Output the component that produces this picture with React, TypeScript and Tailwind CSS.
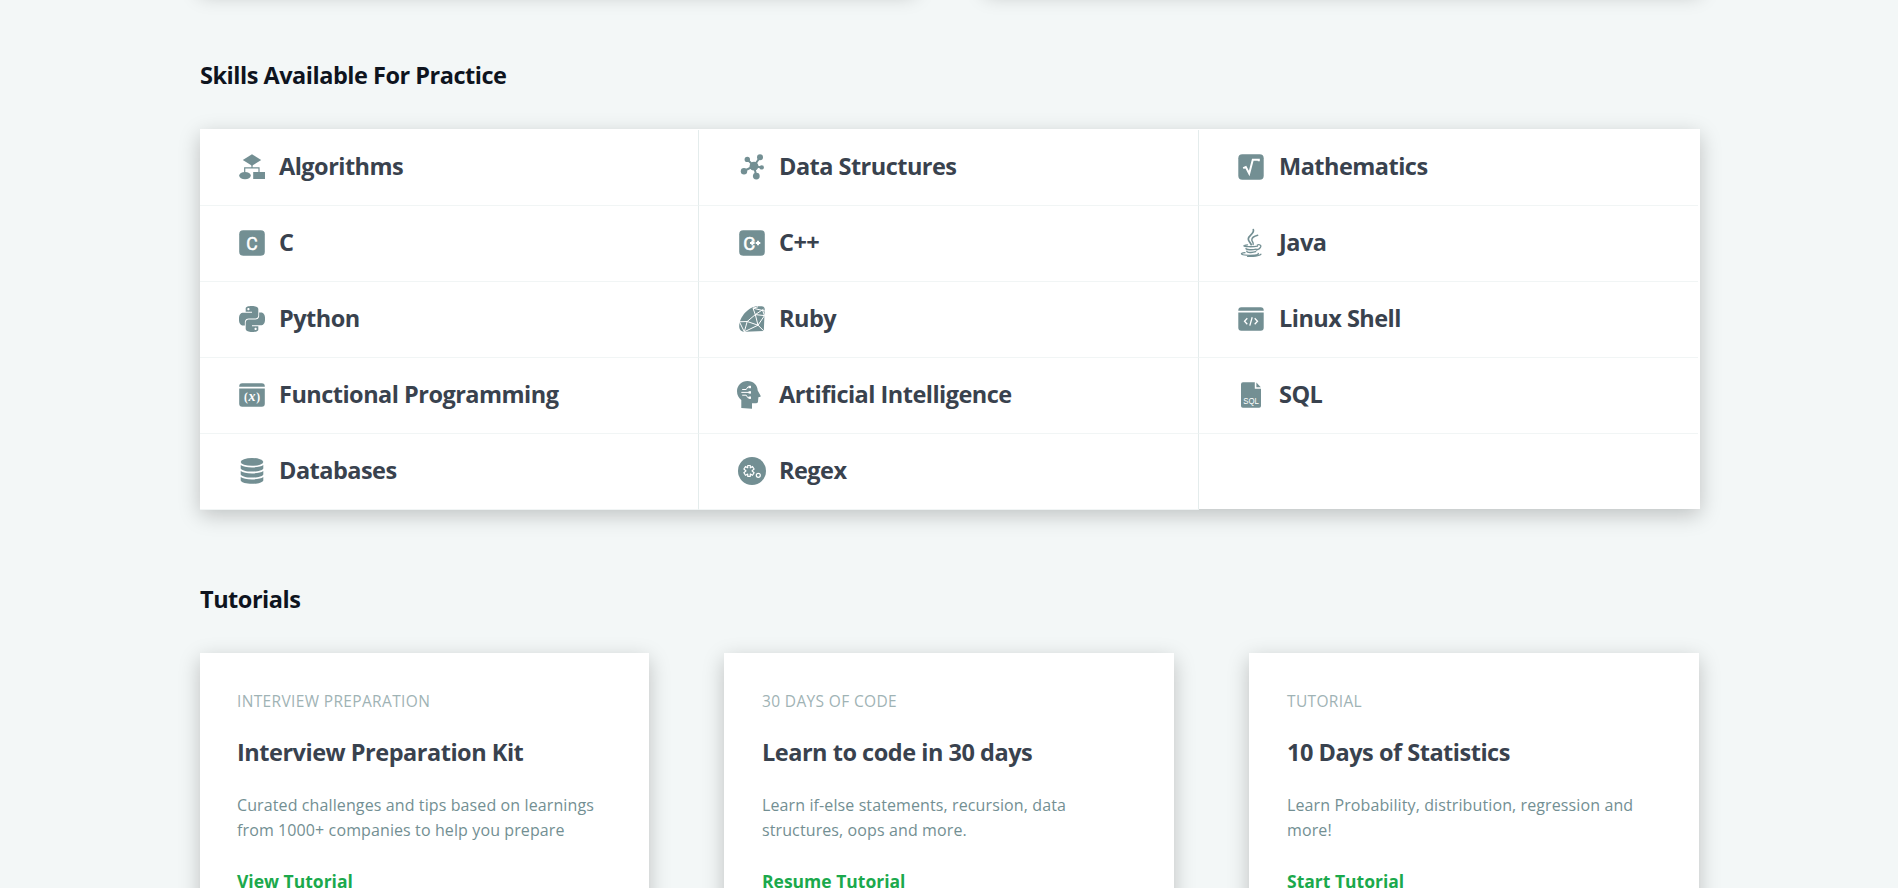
import type { ComponentType, ReactNode } from "react";
import { SiPython } from "react-icons/si";

function Icon({ children }: { children: ReactNode }) {
  return (
    <svg viewBox="0 0 28 28" className="h-7 w-7 overflow-visible" fill="currentColor">
      {children}
    </svg>
  );
}

const AlgorithmsIcon = () => (
  <Icon>
    <path d="M14 1.200 23.200 7 14 12.800 4.800 7Z" />
    <path d="M14 12v2.800M6.700 19.500V14.800H21V19.500" fill="none" stroke="currentColor" strokeWidth="1.200" />
    <ellipse cx="7" cy="22.600" rx="5.800" ry="3.700" />
    <rect x="15.200" y="19" width="11.800" height="7" />
  </Icon>
);

const DataStructuresIcon = () => (
  <Icon>
    <path d="M9.300 6.500 16 13 22 4.300M16 13l7.500 1.400M6 18l10-5 2.300 10" fill="none" stroke="currentColor" strokeWidth="2" />
    <circle cx="16" cy="13.200" r="4.400" />
    <circle cx="9.300" cy="6.400" r="2.700" />
    <circle cx="22" cy="4.200" r="3" />
    <circle cx="23.700" cy="14.400" r="2.200" />
    <circle cx="6" cy="18.200" r="3.200" />
    <circle cx="18.300" cy="23.100" r="3.400" />
  </Icon>
);

const MathematicsIcon = () => (
  <Icon>
    <rect x="0.300" y="1.200" width="25.400" height="25.600" rx="4" />
    <path d="M5.200 15.200 7.800 14l3.400 6.500 3.600-13.700h6v1.400" fill="none" stroke="#fff" strokeWidth="2" />
  </Icon>
);

const CIcon = () => (
  <Icon>
    <rect x="1.200" y="1.200" width="25.600" height="25.600" rx="4" />
    <text x="8.200" y="20.500" fontSize="18.500" fontFamily="Roboto, sans-serif" fill="#fff" stroke="#fff" strokeWidth="0.500" textLength="11.400" lengthAdjust="spacingAndGlyphs">C</text>
  </Icon>
);

const CppIcon = () => (
  <Icon>
    <rect x="1.200" y="1.200" width="25.600" height="25.600" rx="4" />
    <text x="5.200" y="20.500" fontSize="18.500" fontFamily="Roboto, sans-serif" fill="#fff" stroke="#fff" strokeWidth="0.500" textLength="12" lengthAdjust="spacingAndGlyphs">C</text>
    <path d="M14.300 11.700v4.600M12 14h4.600M20 11.700v4.600M17.700 14h4.600" stroke="#fff" strokeWidth="1.900" />
  </Icon>
);

const JavaIcon = () => (
  <Icon>
    <g fill="none" stroke="currentColor" strokeLinecap="round">
      <path d="M15.300.600c1.500 4.400-5 5.600-5 9.400 0 2.200 2 3.400 2.900 5.600" strokeWidth="1.700" />
      <path d="M19.700 6.300c-3.300.8-5.900 2.300-5.900 4.600 0 1.700 2 2.300 1.300 4.600" strokeWidth="1.400" />
      <path d="M9.500 15.800c-2 .2-3.700.7-3.500 1.200.4.900 9 1 13.500.1M19.300 16c2.300-.8 4 .2 3.500 1.700-.4 1.500-2.400 2.900-4.600 3.300" strokeWidth="1.300" />
      <path d="M8 19.400c-.4 1.500 6.500 1.700 10.200.7M8.800 22.200c-.2 1.500 5.700 1.700 8.900.5" strokeWidth="1.400" />
      <path d="M7 23.600c-3 .2-4.400 1-3.200 1.700 2.200 1.300 12.800 1.400 16 .2.800-.3.900-.8.200-1.200M23 25.200c-1.300 2-8.700 2.500-13.500 2.100" strokeWidth="1.200" />
    </g>
  </Icon>
);

const PythonIcon = () => <SiPython className="m-px h-[26px] w-[26px]" />;

const RubyIcon = () => (
  <Icon>
    <path d="M20 1.200h3.600c2 0 3.300 1.300 3.100 3.400L25.800 26 7 26.800c-3.600 0-5.700-2-5.800-5.400C1.200 12 10.500 1.200 20 1.200Z" />
    <path
      d="M1 16.800 9.200 16.500 17.300 9.600 15 3.200 26.800 6M17.300 9.600 26.500 10.600 20 20.200 9.200 16.500 6.300 26.800M17.300 9.600 20 20.200 25.900 26M17.300 9.600 25.500 4.200M20 20.200 6.300 26.800 1.600 17.200M26.500 10.600 24.500 5.200M15 3.200 20 1.800"
      fill="none"
      stroke="#fff"
      strokeWidth="1"
    />
  </Icon>
);

const ShellIcon = () => (
  <Icon>
    <path d="M.3 5.700V5.300a3 3 0 0 1 3-3h19.400a3 3 0 0 1 3 3v.4ZM.3 7.500h25.400v15.200a3 3 0 0 1-3 3H3.300a3 3 0 0 1-3-3Z" />
    <path d="M9.300 13.300 6.500 16.300l2.800 3M16.700 13.300l2.800 3-2.800 3M14.200 12.200 11.800 20.600" fill="none" stroke="#fff" strokeWidth="1.300" />
  </Icon>
);

const FunctionalIcon = () => (
  <Icon>
    <path d="M1.200 5.700V5.300a3 3 0 0 1 3-3h19.600a3 3 0 0 1 3 3v.4ZM1.200 7.500h25.600v15.200a3 3 0 0 1-3 3H4.200a3 3 0 0 1-3-3Z" />
    <text x="14" y="19.500" fontSize="11.500" fontWeight="700" fontFamily="'Liberation Serif', serif" fill="#fff" textAnchor="middle" textLength="16" lengthAdjust="spacing">
      (<tspan fontStyle="italic" fontSize="14">x</tspan>)
    </text>
  </Icon>
);

const DatabasesIcon = () => (
  <Icon>
    <ellipse cx="14" cy="4.900" rx="11.300" ry="3.900" />
    <path d="M2.700 8.100c2 1.500 6 2.300 11.300 2.300s9.300-.8 11.300-2.300v3.300c-1 2-5.500 3.100-11.300 3.100S3.700 13.400 2.700 11.400Z" />
    <path d="M2.700 14.100c2 1.500 6 2.300 11.300 2.300s9.300-.8 11.300-2.300v3.300c-1 2-5.500 3.100-11.300 3.100S3.700 19.400 2.700 17.400Z" />
    <path d="M2.700 20.100c2 1.500 6 2.300 11.300 2.300s9.300-.8 11.300-2.300v3.300c-1 2.200-5.500 3.300-11.300 3.300S3.700 25.600 2.700 23.400Z" />
  </Icon>
);

const IntelligenceIcon = () => (
  <Icon>
    <path d="M9.500 0C3.400 0-1 4.400-1 10.200c0 3.800 1.700 6.600 4.300 8.800v8l10.700.7v-5.400h4.200c1.200 0 1.700-.6 1.800-1.700l.4-4.300 2-.6c.4-.2.4-.5.200-.9L19.700 9.500C19.500 4 15.300 0 9.500 0Z" />
    <path d="M4.200 8.500h4l1.600-2.500h2M3.300 11.400h8M4.200 14.200h4l1.600 2.500h2" fill="none" stroke="#fff" strokeWidth="1" />
    <rect x="10.600" y="4.800" width="2.400" height="2.400" fill="#fff" />
    <rect x="10.600" y="10.200" width="2.400" height="2.400" fill="#fff" />
    <rect x="10.600" y="15.500" width="2.400" height="2.400" fill="#fff" />
  </Icon>
);

const RegexIcon = () => (
  <Icon>
    <circle cx="14" cy="14" r="14" />
    <path
      d="M9.700 8.500h2.600v2.300l2.200-1.300 1.600 2.500-2.100 1.900 2.100 1.900-1.600 2.500-2.200-1.300v2.300H9.700v-2.300l-2.200 1.300-1.600-2.500L8 13.900l-2.100-1.900 1.600-2.500 2.200 1.300Z"
      fill="none"
      stroke="#fff"
      strokeWidth="1.200"
      strokeLinejoin="round"
    />
    <circle cx="20.300" cy="18.300" r="2" fill="none" stroke="#fff" strokeWidth="1.200" />
  </Icon>
);

const SqlIcon = () => (
  <Icon>
    <path d="M5 1.200h11.800v6.600H23v17.200a1.800 1.800 0 0 1-1.800 1.800H4.800A1.800 1.800 0 0 1 3 25V3.200a2 2 0 0 1 2-2Z" />
    <path d="M18.400 1.600 22.800 6.200H18.400Z" />
    <text x="5.200" y="23" fontSize="8.500" fontFamily="'Liberation Sans', sans-serif" fill="#fff" textLength="15.600" lengthAdjust="spacingAndGlyphs">SQL</text>
  </Icon>
);

const skills: { name: string; icon: ComponentType }[] = [
  { name: "Algorithms", icon: AlgorithmsIcon },
  { name: "Data Structures", icon: DataStructuresIcon },
  { name: "Mathematics", icon: MathematicsIcon },
  { name: "C", icon: CIcon },
  { name: "C++", icon: CppIcon },
  { name: "Java", icon: JavaIcon },
  { name: "Python", icon: PythonIcon },
  { name: "Ruby", icon: RubyIcon },
  { name: "Linux Shell", icon: ShellIcon },
  { name: "Functional Programming", icon: FunctionalIcon },
  { name: "Artificial Intelligence", icon: IntelligenceIcon },
  { name: "SQL", icon: SqlIcon },
  { name: "Databases", icon: DatabasesIcon },
  { name: "Regex", icon: RegexIcon },
];

const tutorials = [
  {
    label: "INTERVIEW PREPARATION",
    title: "Interview Preparation Kit",
    text: "Curated challenges and tips based on learnings from 1000+ companies to help you prepare",
    action: "View Tutorial",
  },
  {
    label: "30 DAYS OF CODE",
    title: "Learn to code in 30 days",
    text: "Learn if-else statements, recursion, data structures, oops and more.",
    action: "Resume Tutorial",
  },
  {
    label: "TUTORIAL",
    title: "10 Days of Statistics",
    text: "Learn Probability, distribution, regression and more!",
    action: "Start Tutorial",
  },
];

const cellEdges = ["border-r pl-[38px]", "border-r pl-[39px]", "pl-[39px]"];
const cardPadding = ["pl-[37px]", "pl-[38px]", "pl-[38px]"];

function SkillCell({ name, icon: Glyph, column }: { name: string; icon: ComponentType; column: number }) {
  return (
    <a className={`flex h-[76px] items-start border-b border-r-[#e4ecec] border-b-[#f1f5f5] bg-white pt-[23px] ${cellEdges[column]}`}>
      <span className="flex h-7 w-[41px] shrink-0 text-[#738f93]">
        <Glyph />
      </span>
      <span className="-mt-[3px] text-[23.5px] leading-8 font-bold tracking-[-0.52px] text-[#39424e]">{name}</span>
    </a>
  );
}

export default function App() {
  return (
    <main className="h-[888px] overflow-hidden bg-[#f3f7f7] pl-[200px] font-['Open_Sans','Noto_Sans',sans-serif]">
      <div className="-mt-10 grid h-[29px] w-[1500px] grid-cols-2 gap-[70px]">
        <div className="bg-white shadow-[0_6px_20px_rgba(0,0,0,0.22)]" />
        <div className="bg-white shadow-[0_6px_20px_rgba(0,0,0,0.22)]" />
      </div>

      <h2 className="mt-[70px] text-[23.5px] leading-8 font-bold tracking-[-0.48px] text-[#0e141e]">Skills Available For Practice</h2>
      <section className="mt-[38px] h-[380px] w-[1500px] bg-white pt-px shadow-[0_6px_20px_rgba(0,0,0,0.22)]">
        <div className="grid grid-cols-[499px_500px_499px]">
          {skills.map((skill, i) => (
            <SkillCell key={skill.name} name={skill.name} icon={skill.icon} column={i % 3} />
          ))}
        </div>
      </section>

      <h2 className="mt-[74px] text-[23.5px] leading-8 font-bold tracking-[-0.48px] text-[#0e141e]">Tutorials</h2>
      <section className="mt-[38px] grid grid-cols-[449px_450px_450px] gap-[75px]">
        {tutorials.map((t, i) => (
          <article key={t.title} className={`h-[300px] bg-white pt-9 pr-9 shadow-[0_6px_20px_rgba(0,0,0,0.22)] ${cardPadding[i]}`}>
            <p className="text-[15.5px] leading-6 tracking-[0.35px] text-[#9fb3b5]">{t.label}</p>
            <h3 className="mt-[23px] text-[23.5px] leading-8 font-bold tracking-[-0.48px] text-[#39424e]">{t.title}</h3>
            <p className="mt-[25px] text-base leading-[25px] tracking-[0.11px] text-[#738f93]">{t.text}</p>
            <a className="mt-6 block text-[17.5px] leading-7 font-bold text-[#1ba94c]">{t.action}</a>
          </article>
        ))}
      </section>
    </main>
  );
}
